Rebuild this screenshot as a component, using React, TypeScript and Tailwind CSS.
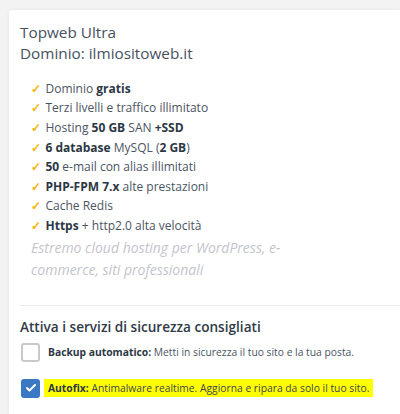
import { Check } from "lucide-react"

// Feature list: each item is a set of plain / bold fragments
type Part = { t: string; b?: boolean }

const features: Part[][] = [
  [{ t: "Dominio " }, { t: "gratis", b: true }],
  [{ t: "Terzi livelli e traffico illimitato" }],
  [{ t: "Hosting " }, { t: "50 GB", b: true }, { t: " SAN " }, { t: "+SSD", b: true }],
  [{ t: "6 database", b: true }, { t: " MySQL (" }, { t: "2 GB", b: true }, { t: ")" }],
  [{ t: "50", b: true }, { t: " e-mail con alias illimitati" }],
  [{ t: "PHP-FPM 7.x", b: true }, { t: " alte prestazioni" }],
  [{ t: "Cache Redis" }],
  [{ t: "Https", b: true }, { t: " + http2.0 alta velocità" }],
]

const Feature: React.FC<{ parts: Part[] }> = ({ parts }) => (
  <li className="flex items-center h-[19.6px]">
    <span className="w-[14.5px] text-[#f4b400] text-[12px] font-bold leading-none">✓</span>
    <span>
      {parts.map((p, i) =>
        p.b ? (
          <b key={i} className="font-bold text-[#2c3744]">{p.t}</b>
        ) : (
          <span key={i}>{p.t}</span>
        )
      )}
    </span>
  </li>
)

export default function App() {
  return (
    <div className="w-[400px] h-[414px] overflow-hidden bg-[#f3f3f3] pt-[10px] pl-[9px] font-['Open_Sans',sans-serif] text-[#4a5562]">
      <div className="bg-white rounded-tl-[4px] shadow-[0_0_4px_rgba(0,0,0,0.06)] h-full pt-[12px] pl-[11px]">
        {/* Plan header */}
        <div className="text-[15.3px] leading-[21px] text-[#46515e]">
          <p>Topweb Ultra</p>
          <p>Dominio: ilmiositoweb.it</p>
        </div>

        {/* Features */}
        <ul className="mt-[15px] pl-[11px] text-[12px]">
          {features.map((f, i) => (
            <Feature key={i} parts={f} />
          ))}
        </ul>
        <p className="pl-[11px] mt-[1px] w-[272px] italic text-[14px] leading-[22px] text-[#c3c5cc]">
          Estremo cloud hosting per WordPress, e-commerce, siti professionali
        </p>

        <div className="mt-[24px] border-t border-[#ececec]" />

        {/* Security services */}
        <div className="pt-[11px]">
          <h3 className="text-[13.6px] font-semibold leading-[20px] text-[#2f3a47]">
            Attiva i servizi di sicurezza consigliati
          </h3>
          <label className="mt-[6px] ml-[1px] flex items-center gap-[8px] text-[10.3px]">
            <span className="w-[19px] h-[19px] rounded-[3px] border-2 border-[#c9c9c9] bg-white shrink-0" />
            <span>
              <b className="font-bold text-[#2c3744]">Backup automatico:</b> Metti in sicurezza il tuo sito e la tua posta.
            </span>
          </label>
          <label className="mt-[17px] ml-[1px] flex items-center gap-[4px] text-[10.3px]">
            <span className="w-[19px] h-[19px] rounded-[3px] bg-[#3b78c4] flex items-center justify-center shrink-0">
              <Check size={12} strokeWidth={4} className="text-white" />
            </span>
            <span className="bg-[#ffff00] px-[4px] leading-[18px] text-[#3d4550]">
              <b className="font-bold text-[#2c3744]">Autofix:</b> Antimalware realtime. Aggiorna e ripara da solo il tuo sito.
            </span>
          </label>
        </div>
      </div>
    </div>
  )
}
